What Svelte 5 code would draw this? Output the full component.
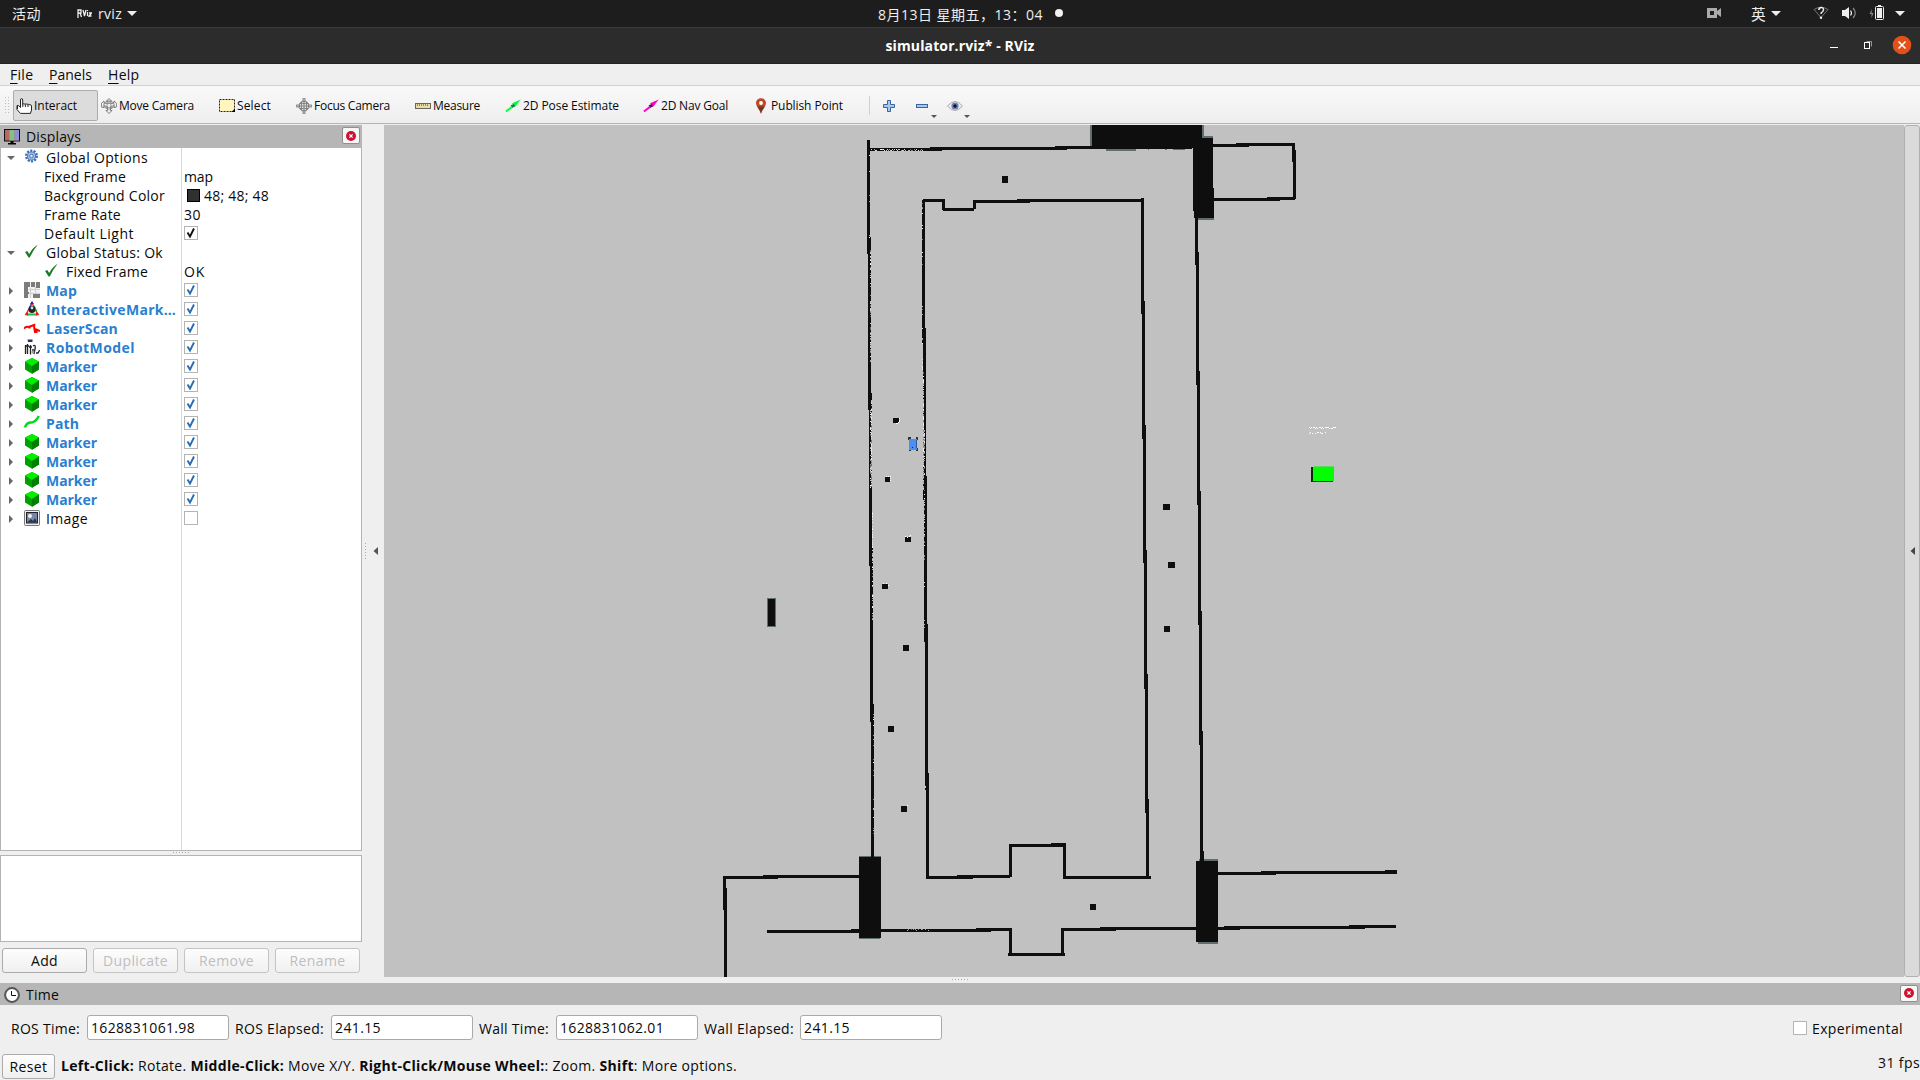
<script>
  // Spreads the letters of a label so that it fills the given width.
  function fit(node, width) {
    if (!width) return;
    const natural = node.getBoundingClientRect().width;
    const count = Array.from(node.textContent).length;
    node.style.letterSpacing = (width - natural) / count + 'px';
  }

  const tools = [
    { icon: 'hand', label: 'Interact', w: 85, tw: 43, active: true },
    { icon: 'move', label: 'Move Camera', w: 118, tw: 75 },
    { icon: 'select', label: 'Select', w: 77, tw: 34 },
    { icon: 'focus', label: 'Focus Camera', w: 119, tw: 76 },
    { icon: 'measure', label: 'Measure', w: 90, tw: 47 },
    { icon: 'pose', label: '2D Pose Estimate', w: 138, tw: 96 },
    { icon: 'nav', label: '2D Nav Goal', w: 110, tw: 67 },
    { icon: 'pin', label: 'Publish Point', w: 115, tw: 72 }
  ];

  const marker = { arrow: 'r', icon: 'cube', label: 'Marker', tw: 51, blue: true, check: 'blue' };
  const rows = [
    { arrow: 'd', icon: 'gear', label: 'Global Options', tw: 102 },
    { sub: true, label: 'Fixed Frame', tw: 82, value: 'map', vw: 29 },
    { sub: true, label: 'Background Color', tw: 121, value: '48; 48; 48', vw: 65, swatch: true },
    { sub: true, label: 'Frame Rate', tw: 77, value: '30', vw: 17 },
    { sub: true, label: 'Default Light', tw: 90, check: 'black' },
    { arrow: 'd', icon: 'ok', label: 'Global Status: Ok', tw: 117 },
    { sub: true, icon: 'ok', label: 'Fixed Frame', tw: 82, value: 'OK', vw: 21 },
    { arrow: 'r', icon: 'map', label: 'Map', tw: 31, blue: true, check: 'blue' },
    { arrow: 'r', icon: 'im', label: 'InteractiveMark…', tw: 130, blue: true, check: 'blue' },
    { arrow: 'r', icon: 'laser', label: 'LaserScan', tw: 72, blue: true, check: 'blue' },
    { arrow: 'r', icon: 'robot', label: 'RobotModel', tw: 89, blue: true, check: 'blue' },
    marker, marker, marker,
    { arrow: 'r', icon: 'path', label: 'Path', tw: 33, blue: true, check: 'blue' },
    marker, marker, marker, marker,
    { arrow: 'r', icon: 'image', label: 'Image', tw: 42, check: 'empty' }
  ];

  const buttons = [
    { label: 'Add', tw: 27, on: true },
    { label: 'Duplicate', tw: 65 },
    { label: 'Remove', tw: 55 },
    { label: 'Rename', tw: 56 }
  ];

  const fields = [
    { label: 'ROS Time:', tw: 69, lw: 76, value: '1628831061.98', vw: 104 },
    { label: 'ROS Elapsed:', tw: 89, lw: 96, value: '241.15', vw: 46 },
    { label: 'Wall Time:', tw: 70, lw: 77, value: '1628831062.01', vw: 104 },
    { label: 'Wall Elapsed:', tw: 90, lw: 96, value: '241.15', vw: 46 }
  ];

  // Walls of the occupancy grid: x1, y1, x2, y2 in window coordinates.
  const walls = [
    [867,140,870,254],[868,237,871,410],[869,393,872,566],[870,548,873,722],[871,704,874,858],
    [922,200,925,344],[923,328,926,500],[924,476,927,642],[925,624,928,790],[926,773,929,879],
    [1141,198,1144,314],[1142,301,1145,439],[1143,425,1146,563],[1144,550,1147,689],[1145,674,1148,813],[1146,799,1149,878],
    [1195,218,1198,265],[1196,252,1199,385],[1197,371,1200,505],[1198,491,1201,625],[1199,611,1202,745],[1200,731,1203,862],[1201,851,1204,862],
    [870,148,942,151],[930,147,1067,150],[1055,146,1192,149],
    [1092,125,1202,148],[1193,138,1213,211],[1194,188,1214,218],
    [1213,144,1249,147],[1236,143,1295,146],[1292,143,1295,162],[1293,150,1296,199],[1214,198,1280,201],[1267,197,1295,200],
    [923,199,945,202],[942,199,945,210],[943,208,974,211],[973,200,976,209],[973,200,1030,203],[1017,199,1143,202],
    [1002,176,1008,183],[893,418,899,423],[885,477,890,482],[905,537,911,542],[882,584,888,589],[903,645,909,651],
    [1163,504,1170,510],[1168,562,1175,568],[1164,626,1170,632],[888,726,894,732],[901,806,907,812],[1090,904,1096,910],
    [723,876,778,879],[763,875,860,878],[723,876,726,910],[724,888,727,977],[767,930,859,933],[851,929,991,932],[976,928,1012,931],
    [859,857,881,938],[926,876,973,879],[957,875,1010,878],[1009,844,1012,877],[1009,844,1066,847],[1051,843,1066,846],
    [1063,843,1066,879],[1063,876,1151,879],[1009,928,1012,955],[1008,953,1065,956],[1061,928,1064,955],[1061,928,1116,931],[1100,927,1198,930],
    [1196,861,1218,942],[1218,872,1276,875],[1261,871,1397,874],[1385,870,1397,873],[1218,927,1240,930],[1224,926,1365,929],[1349,925,1396,928],
    [768,599,775,626]
  ];
  const fringe = [
    [1090,125,1092,146],[1092,143,1094,146],[1202,125,1204,138],[1202,136,1213,138],[1198,218,1214,220],[1106,149,1136,151],[1148,149,1149,150],[1165,149,1167,150],[1173,149,1185,150],
    [859,856,881,858],[861,938,880,939],[859,937,861,939],[1196,861,1198,863],[1199,859,1218,861],[1198,942,1218,944],[1196,941,1198,942],[767,598,776,627]
  ];

  // Laser returns: x, first y, last y, share of pixels that are hit.
  let seed = 7;
  const rnd = () => (seed = (seed * 16807) % 2147483647) / 2147483647;
  const hits = [];
  const bands = [
    [869,155,250,.08],[870,250,300,.3],[870,300,362,.6],[871,400,488,.95],[870,410,488,.5],[872,510,560,.6],[872,560,620,.4],[873,680,850,.06],
    [922,200,330,.07],[922,330,372,.25],[923,372,420,.6],[923,418,490,.95],[924,430,475,.75],[924,490,560,.35],[924,560,660,.06],[925,690,800,.05]
  ];
  for (const [x, a, b, p] of bands)
    for (let y = a; y < b; y++) if (rnd() < p) hits.push([x, y, rnd()]);
  for (let x = 871; x < 923; x++) if (rnd() < .75) hits.push([x, 149 + (rnd() < .5 ? 1 : 0), rnd()]);
  for (let x = 906; x < 929; x++) if (rnd() < .6) hits.push([x, 929 + (rnd() < .5 ? 1 : 0), rnd() * .6]);
  for (const [x, y] of [[897,423],[898,422],[899,421],[899,420],[899,418],[896,423],[886,476],[888,476],[890,476],[890,478],[890,480],[905,536],[907,537],[909,536],[910,535],[883,583],[886,583],[888,585],[907,805]])
    hits.push([x, y, 1]);

  // Tiny caption above the green marker.
  const specks = [];
  for (let x = 1309; x < 1337; x++) {
    if (x % 6 !== 4) specks.push([x, 427 + Math.floor(rnd() * 2)]);
    if (x < 1327 && rnd() < .6) specks.push([x, 432 + Math.floor(rnd() * 2)]);
  }
</script>

{#snippet t(text, width)}<span class="t" use:fit={width}>{text}</span>{/snippet}

{#snippet glyph(name)}
  <svg class="ico" width="16" height="16" viewBox="0 0 16 16">
    {#if name === 'hand'}
      <path d="M4.5 9.5V2Q4.5.6 5.6.6T6.7 2V6.3Q7.5 5.2 8.8 6.2Q10 5.4 11.2 6.4Q12.2 5.6 13 6.7Q15.4 6.2 15.5 8V12L14.5 15.4H4.5L1 11.6V7.6Q2.5 6.6 4.5 9.5Z" fill="#fff" stroke="#222" />
      <path d="M6.8 6V9M9.4 6.5V9M12 6.8V9M1.5 11L1.5 8" stroke="#222" fill="none" />
    {:else if name === 'move'}
      <path d="M8 .5L10.5 3H9V6L13 4.5V3L15.6 5.3V9L13 9.6V7.8L9.5 8.5V12.5H11L8 15.6L5 12.5H6.5V8.5L3 7.8V9.6L.4 9V5.3L3 3V4.5L7 6V3H5.5Z" fill="#eee" stroke="#666" stroke-width=".8" />
      <ellipse cx="8" cy="7" rx="5.2" ry="4" fill="none" stroke="#777" stroke-width=".8" /><path d="M3 5.5H13M4 9.5H12M6 4V11M10 4V11" stroke="#888" stroke-width=".6" />
    {:else if name === 'focus'}
      <circle cx="8" cy="8" r="5" fill="#ddd" stroke="#777" /><path d="M7 0H9V3.5H7ZM7 12.5H9V16H7ZM0 7H3.5V9H0ZM12.5 7H16V9H12.5Z" fill="#bbb" stroke="#777" stroke-width=".7" />
      <path d="M8 3V13M3 8H13M5.5 4V12M10.5 4V12M4 5.5H12M4 10.5H12" stroke="#777" stroke-width=".8" />
    {:else if name === 'select'}
      <rect x=".5" y="1.5" width="15" height="12" fill="#fff5bd" stroke="#222" stroke-dasharray="2 1" /><path d="M16 10.5V14H12.5Z" />
    {:else if name === 'measure'}
      <rect x=".5" y="5.5" width="15" height="5" fill="#ecdca4" stroke="#666" /><path d="M2.5 6V8M4.5 6V8M6.5 6V8M8.5 6V8M10.5 6V8M12.5 6V8" stroke="#777" stroke-width=".8" />
    {:else if name === 'pose' || name === 'nav'}
      <g fill={name === 'pose' ? '#0f3' : '#f0c'}><path d="M.3 12.8L6.5 8L8 9.5L1.4 14.2Z" /><path d="M15.8 1.5L7 5.3L10 9Z" /></g><path d="M5.5 7.2L9 6L10 8.5L7.5 9.8Z" fill={name === 'pose' ? '#084' : '#615'} />
    {:else if name === 'pin'}
      <path d="M8 .2C5 .2 3 2.4 3 5C3 8.5 7 12 8 15.8C9 12 13 8.5 13 5C13 2.4 11 .2 8 .2Z" fill="#c04827" /><path d="M4.4 8.6C6 11 7.4 13 8 15.8C8.6 13 10 11 11.6 8.6Z" fill="#6b3a25" /><circle cx="8" cy="5" r="1.9" fill="#fff" />
    {:else if name === 'plus'}
      <path d="M6.5 2.5H9.5V6.5H13.5V9.5H9.5V13.5H6.5V9.5H2.5V6.5H6.5Z" fill="#a9c8e8" stroke="#3465a4" />
    {:else if name === 'minus'}
      <rect x="2.5" y="6.5" width="11" height="3" fill="#a9c8e8" stroke="#3465a4" />
    {:else if name === 'eye'}
      <path d="M.5 8Q8-1 15.5 8Q8 17 .5 8Z" fill="#eee" stroke="#aaa" /><circle cx="8" cy="8" r="3.6" fill="#6c80b8" /><circle cx="8" cy="8" r="1.7" fill="#112" />
    {:else if name === 'monitor'}
      <rect x=".5" y=".5" width="15" height="11.5" fill="#b66" stroke="#111" /><rect x="5.5" y="1" width="5" height="10.5" fill="#7fc47f" /><rect x="10.5" y="1" width="4.5" height="10.5" fill="#8f8fd6" /><path d="M6.5 12H9.5V14H12V15.5H4V14H6.5Z" />
    {:else if name === 'clock'}
      <circle cx="8" cy="8" r="6.9" fill="#fff" stroke="#555" stroke-width="2" /><path d="M7.5 4V8.5H12" fill="none" stroke="#111" />
    {:else if name === 'gear'}
      <circle cx="7.5" cy="7" r="5.3" fill="none" stroke="#3f6fb0" stroke-width="2.4" stroke-dasharray="2 1.3" /><circle cx="7.5" cy="7" r="4.1" fill="#9bbce4" stroke="#4a7abb" /><circle cx="7.5" cy="7" r="1.8" fill="#dce8f6" stroke="#4a7abb" />
    {:else if name === 'ok'}
      <path d="M1 8L3.3 7L5.2 10Q8.5 4 13.7 .8Q9 6.5 5.8 13.5H4.6Z" fill="#1e7a26" />
    {:else if name === 'map'}
      <g shape-rendering="crispEdges"><rect width="16" height="16" fill="#f2f2f2" /><path d="M6.5 6V16M11.5 5V12M5 7.5H16M4 11.5H16" stroke="#d0d0d0" /><path d="M0 0H6V5H4V10H5V12H4V16H0ZM7 0H11V5H7ZM12 0H16V6H12ZM9 12H16V16H9Z" fill="#7c7c7c" /></g>
    {:else if name === 'im'}
      <path d="M8 2L14 13.5H2Z" fill="#eee" stroke="#e22" stroke-width="1.4" /><path d="M8 2L5 8" stroke="#16e" stroke-width="1.5" /><path d="M4 13.5H12M10 5L12.5 10" stroke="#2b4" stroke-width="1.5" /><circle cx="8" cy="8.5" r="3.4" fill="#222" /><circle cx="8" cy="7" r="1.4" fill="#ddd" /><path d="M8 0L10 3H6Z" fill="#22d" /><path d="M1 13L4 11V15ZM15 13L12 11V15Z" fill="#d22" />
    {:else if name === 'laser'}
      <path d="M0 8.5L2 7L6 6.5M5.5 7V8.5M6 6.5L10.2 5V8L11 12H12.5V9.5L16 11" fill="none" stroke="#f00" stroke-width="2" />
    {:else if name === 'robot'}
      <path d="M3.5 .5H8.5V3H4Z" fill="#236" /><path d="M1.5 6V15M3.5 5V15M5 8H8M6.5 6V15.5M9 7Q12 5 11 10L10 15M12 14H14L15.7 11M1 7H5M8 11H10" fill="none" stroke="#222" stroke-width="1.3" /><circle cx="9" cy="13" r="1.5" fill="#999" />
    {:else if name === 'cube'}
      <path d="M8 0L15 3.5V11.5L8 15.8L1 11.5V3.5Z" fill="#00a000" /><path d="M8 0L15 3.5L8 8L1 3.5Z" fill="#00f000" /><path d="M8 8L15 3.5V11.5L8 15.8Z" fill="#007f00" />
    {:else if name === 'path'}
      <path d="M1 12.5Q2.5 7.5 7 7.5T14.8 1" fill="none" stroke="#00dc1c" stroke-width="2.5" />
    {:else if name === 'image'}
      <rect x=".5" y=".5" width="15" height="15" rx="1" fill="#eee" stroke="#777" /><rect x="2.5" y="2.5" width="11" height="10.5" fill="#7388ab" stroke="#223" /><circle cx="6" cy="6" r="2" fill="#f4f4d8" /><path d="M3 12.5L7 9L9 11L11 8L13.2 12.5Z" fill="#334" />
    {/if}
  </svg>
{/snippet}

{#snippet closer()}
  <span class="closer"><svg width="10" height="10" viewBox="0 0 10 10"><circle cx="5" cy="5" r="5" fill="#cc1133" /><path d="M3.4 3.4L6.6 6.6M6.6 3.4L3.4 6.6" stroke="#fff" stroke-width="1.3" /></svg></span>
{/snippet}

<div class="screen">
  <header class="topbar">
    <div class="tl">
      {@render t('活动', 29)}
      <svg class="rv" width="15" height="9" viewBox="0 0 15 9"><path d="M1 9V1H4V4H1.5M3 4L4.5 8M6 1L7.5 7L9 1M10.5 3V7M12 4H14.5L12 7H14.5M10.5 1V2" fill="none" stroke="#eee" stroke-width="1.3" /></svg>
      {@render t('rviz', 24)}
      <svg class="tri" width="10" height="5"><path d="M0 0H10L5 5Z" fill="#eee" /></svg>
    </div>
    <div class="tc">{@render t('8月13日 星期五，13：04', 165)}<i class="dot"></i></div>
    <svg class="tray" width="210" height="27" viewBox="1700 0 210 27">
      <path d="M1707 8H1717V11L1721 8V17L1717 14V18H1707Z" fill="#aaa" /><rect x="1710" y="11" width="4" height="4" fill="#1d1d1d" />
      <path d="M1771 11H1781L1776 16Z" fill="#eee" />
      <path d="M1814 9.5Q1821 5 1828 9.5L1821 17.5Z" fill="none" stroke="#777" /><path d="M1818.8 10Q1819 7.5 1821.3 7.5T1823.5 10Q1823.3 11.5 1821.2 12.8V14" fill="none" stroke="#eee" stroke-width="1.5" /><circle cx="1821" cy="17.8" r="1.2" fill="#eee" />
      <path d="M1842 10H1845L1849 7V19L1845 16H1842Z" fill="#eee" /><path d="M1850.5 10.5Q1852.5 13 1850.5 15.5" fill="none" stroke="#eee" stroke-width="1.2" /><path d="M1853 8Q1857.5 13 1853 18" fill="none" stroke="#888" stroke-width="1.2" />
      <path d="M1872 9L1869.5 14H1871.5V18L1873.5 13H1871.5Z" fill="#888" /><rect x="1875.5" y="6.5" width="8" height="13" rx="1" fill="none" stroke="#eee" /><rect x="1877" y="8" width="5" height="10" fill="#eee" /><rect x="1878" y="5" width="3" height="2" fill="#eee" />
      <path d="M1895 11H1905L1900 16Z" fill="#eee" />
      <text x="1751" y="20" fill="#eee" font-size="14.67" class="cjk">英</text>
    </svg>
  </header>

  <div class="titlebar">
    <b>{@render t('simulator.rviz* - RViz', 149)}</b>
    <svg width="90" height="36" viewBox="1825 28 90 36">
      <rect x="1830" y="47" width="8" height="1" fill="#fff" />
      <path d="M1866.5 41.5H1871.5V46.5" fill="none" stroke="#999" /><rect x="1864.5" y="42.5" width="5" height="6" fill="none" stroke="#fff" />
      <circle cx="1902" cy="45" r="9.3" fill="#e4501a" /><path d="M1898.5 41.5L1905.5 48.5M1905.5 41.5L1898.5 48.5" stroke="#fff" stroke-width="1.6" />
    </svg>
  </div>

  <nav class="menu">
    <span class="file"><u>F</u>ile</span><span class="panels"><u>P</u>anels</span><span class="help"><u>H</u>elp</span>
  </nav>

  <div class="toolbar">
    <svg class="grip" width="13" height="18"><path d="M5.5 0V18M8.5 0V18" stroke="#bbb" stroke-dasharray="1 2" /></svg>
    {#each tools as tool}
      <div class="tool" class:active={tool.active} style:width="{tool.w}px">{@render glyph(tool.icon)}{@render t(tool.label, tool.tw)}</div>
    {/each}
    <i class="sep"></i>
    <div class="small">{@render glyph('plus')}</div>
    <div class="small">{@render glyph('minus')}<svg class="drop" width="6" height="3"><path d="M0 0H6L3 3Z" fill="#555" /></svg></div>
    <div class="small">{@render glyph('eye')}<svg class="drop" width="6" height="3"><path d="M0 0H6L3 3Z" fill="#555" /></svg></div>
  </div>

  <main class="work">
    <section class="displays">
      <div class="head">{@render glyph('monitor')}{@render t('Displays', 55)}{@render closer()}</div>
      <div class="tree">
        {#each rows as row}
          <div class="row">
            <div class="name" class:sub={row.sub} class:blue={row.blue}>
              {#if row.arrow}
                <svg class="arrow" width="8" height="8">{#if row.arrow === 'd'}<path d="M0 2H8L4 6Z" fill="#666" />{:else}<path d="M2 0V8L6 4Z" fill="#666" />{/if}</svg>
              {/if}
              {#if row.icon}{@render glyph(row.icon)}{/if}
              {@render t(row.label, row.tw)}
            </div>
            <div class="value">
              {#if row.swatch}<i class="swatch"></i>{/if}
              {#if row.value}{@render t(row.value, row.vw)}{/if}
              {#if row.check}
                <span class="box">{#if row.check !== 'empty'}<svg width="12" height="12"><path d="M2.5 5.5L5 9.5L9 1.5" fill="none" stroke={row.check === 'blue' ? '#2a6db0' : '#111'} stroke-width="1.9" /></svg>{/if}</span>
              {/if}
            </div>
          </div>
        {/each}
      </div>
      <div class="hsplit"><i></i></div>
      <div class="desc"></div>
      <div class="btns">
        {#each buttons as b}<div class="btn" class:off={!b.on}>{@render t(b.label, b.tw)}</div>{/each}
      </div>
    </section>

    <div class="vsplit"><svg width="22" height="24"><path d="M3.5 4V22" stroke="#aaa" stroke-width="1" stroke-dasharray="1 2" /><path d="M16 8V16L11.5 12Z" fill="#555" /></svg></div>

    <svg class="view" width="1520" height="852" viewBox="384 125 1520 852" shape-rendering="crispEdges">
      <g fill="#5f6e6e">{#each fringe as [a, b, c, d]}<rect x={a} y={b} width={c - a} height={d - b} />{/each}</g>
      <g fill="#0e0e0e">{#each walls as [a, b, c, d]}<rect x={a} y={b} width={c - a} height={d - b} />{/each}</g>
      <g fill="#fff">{#each hits as [x, y, o]}<rect {x} {y} width="1" height="1" opacity={0.35 + o * 0.65} />{/each}</g>
      <g fill="#fff">{#each specks as [x, y]}<rect {x} {y} width="1" height="1" />{/each}</g>
      <path d="M908 437H911V440H908ZM916 437H918V440H916ZM909 448H911V451H909ZM916 448H918V451H916Z" fill="#333" />
      <rect x="909" y="439" width="8" height="11" fill="#4b8ff5" /><rect x="916" y="440" width="1" height="8" fill="#2b5799" /><rect x="912" y="447" width="1" height="1" fill="#124" />
      <rect x="1311" y="467" width="3" height="15" fill="#0b2a0b" /><rect x="1312" y="480" width="21" height="2" fill="#064a06" /><rect x="1313" y="467" width="21" height="14" fill="#00ff00" /><rect x="1314" y="466" width="20" height="1" fill="#5edb5e" />
    </svg>

    <div class="collapse"><svg width="5" height="8"><path d="M5 0V8L.5 4Z" fill="#444" /></svg></div>
  </main>

  <div class="bsplit"><i></i></div>

  <div class="head time">{@render glyph('clock')}{@render t('Time', 33)}{@render closer()}</div>

  <div class="times">
    {#each fields as f}
      <label style:width="{f.lw}px">{@render t(f.label, f.tw)}</label>
      <div class="input">{@render t(f.value, f.vw)}</div>
    {/each}
    <div class="exp"><span class="box"></span>{@render t('Experimental', 91)}</div>
  </div>

  <footer class="status">
    <div class="btn reset">{@render t('Reset', 38)}</div>
    <p class="t" use:fit={676}><b>Left-Click:</b> Rotate. <b>Middle-Click:</b> Move X/Y. <b>Right-Click/Mouse Wheel:</b>: Zoom. <b>Shift</b>: More options.</p>
    <span class="fps">{@render t('31 fps', 42)}</span>
  </footer>
</div>

<style>
  :global(body) { margin: 0; overflow: hidden; }
  .screen { width: 1920px; height: 1080px; display: flex; flex-direction: column; background: #efefef; color: #0a0a0a; font: 14px/18px "Open Sans", "Noto Sans CJK SC", sans-serif; overflow: hidden; }
  .screen * { box-sizing: border-box; }
  svg { display: block; flex: none; }
  i { display: block; }
  .t { display: inline-block; white-space: pre; flex: none; }
  .cjk { font-family: "Noto Sans CJK SC", sans-serif; }

  .topbar { height: 27px; flex: none; background: #1d1d1d; color: #eee; display: grid; grid-template-columns: 1fr auto 1fr; align-items: center; }
  .tl { display: flex; align-items: center; padding-left: 12px; }
  .rv { margin: 0 6px 0 36px; }
  .tri { margin-left: 5px; }
  .tc { display: flex; align-items: center; gap: 12px; padding: 2px 0 0 21px; }
  .dot { width: 8px; height: 8px; border-radius: 50%; background: #f2f2f2; margin-top: -3px; }
  .tray { justify-self: end; margin-right: 10px; }
  .titlebar { height: 37px; flex: none; background: #2c2c2c; border-top: 1px solid #3a3a3a; border-bottom: 1px solid #222; color: #fff; display: grid; grid-template-columns: 95px 1fr 95px; align-items: center; }
  .titlebar b { grid-column: 2; text-align: center; }

  .menu { height: 22px; flex: none; border-bottom: 1px solid #d2d2d2; display: flex; align-items: center; padding: 1px 0 0 10px; }
  .menu u { text-decoration-thickness: 1px; text-underline-offset: 3px; }
  .file { width: 39px; letter-spacing: .3px; }
  .panels { width: 59px; }
  .help { letter-spacing: .3px; }

  .toolbar { height: 38px; flex: none; background: linear-gradient(#f9f9f9, #eee); border-bottom: 1px solid #b4b4b4; margin-bottom: 1px; padding-top: 2px; display: flex; align-items: center; font-size: 12px; }
  .tool { height: 31px; display: flex; align-items: center; gap: 2px; padding-left: 3px; }
  .tool .t { padding-top: 1px; }
  .tool.active { background: #dcdcdc; border: 1px solid #acacac; border-radius: 2px; padding-left: 2px; }
  .sep { width: 1px; height: 19px; background: #d0d0d0; margin: 0 11px 0 4px; }
  .small { width: 33px; height: 31px; display: flex; align-items: center; position: relative; }
  .drop { position: absolute; left: 17px; top: 25px; }

  .work { height: 852px; flex: none; display: flex; }
  .displays { width: 362px; display: flex; flex-direction: column; }
  .head { height: 23px; flex: none; background: #b6b6b6; display: flex; align-items: center; gap: 6px; padding: 0 2px 0 4px; }
  .closer { width: 18px; height: 17px; margin: -2px 0 0 auto; border: 1px solid #8f8f8f; border-radius: 2px; background: #f7f7f7; display: grid; place-items: center; }
  .tree { height: 703px; flex: none; border: 1px solid #b4b4b4; border-top: 0; background: linear-gradient(90deg, #fff 180px, #d9d9d9 180px 181px, #fff 181px); }
  .row { height: 19px; display: flex; }
  .name { width: 181px; display: flex; align-items: center; padding-left: 6px; }
  .arrow { margin-right: 9px; }
  .name .ico { margin: -1px 6px 0 0; }
  .name.sub { padding-left: 43px; }
  .blue { color: #2a7fd0; font-weight: 700; }
  .value { display: flex; align-items: center; padding-left: 2px; }
  .swatch { width: 13px; height: 13px; border: 1px solid #000; background: #303030; margin: 0 4px 0 3px; }
  .box { width: 14px; height: 14px; border: 1px solid #b4b4b4; background: #fff; display: block; }
  .value .box { margin-top: -1px; }
  .hsplit { height: 4px; flex: none; padding-top: 1px; }
  .hsplit i, .bsplit i { width: 16px; height: 1px; margin: 0 auto; background: repeating-linear-gradient(90deg, #aaa 0 1px, transparent 1px 3px); }
  .desc { height: 87px; flex: none; border: 1px solid #b4b4b4; background: #fff; }
  .btns { display: flex; gap: 6px; padding: 6px 2px 0; }
  .btn { width: 85px; height: 25px; border: 1px solid #ababab; border-radius: 3px; background: linear-gradient(#fdfdfd, #f0f0f0); display: flex; align-items: center; justify-content: center; }
  .btn.off { color: #bebebe; border-color: #c4c4c4; }

  .vsplit { width: 22px; display: flex; align-items: center; }
  .view { background: #c1c1c1; }
  .collapse { width: 16px; border: 1px solid #b0b0b0; border-radius: 3px; background: #dadada; display: grid; place-items: center; }

  .bsplit { height: 6px; flex: none; padding-top: 2px; }
  .time { height: 22px; padding-top: 2px; }
  .time .closer { margin-top: -4px; }
  .times { height: 45px; flex: none; display: flex; align-items: flex-start; padding: 10px 17px 0 11px; }
  .times label { padding-top: 5px; }
  .input { width: 142px; height: 25px; border: 1px solid #aaa; border-radius: 3px; background: #fff; padding: 3px 0 0 3px; margin-right: 6px; }
  .exp { margin-left: auto; display: flex; align-items: center; gap: 5px; padding-top: 5px; }
  .exp .box { margin-top: -2px; }
  .status { flex: 1; display: flex; align-items: flex-start; padding: 4px 0 0 2px; }
  .status p { margin: 3px 0 0 6px; }
  .reset { width: 53px; }
  .fps { margin: 0 0 0 auto; }
</style>
